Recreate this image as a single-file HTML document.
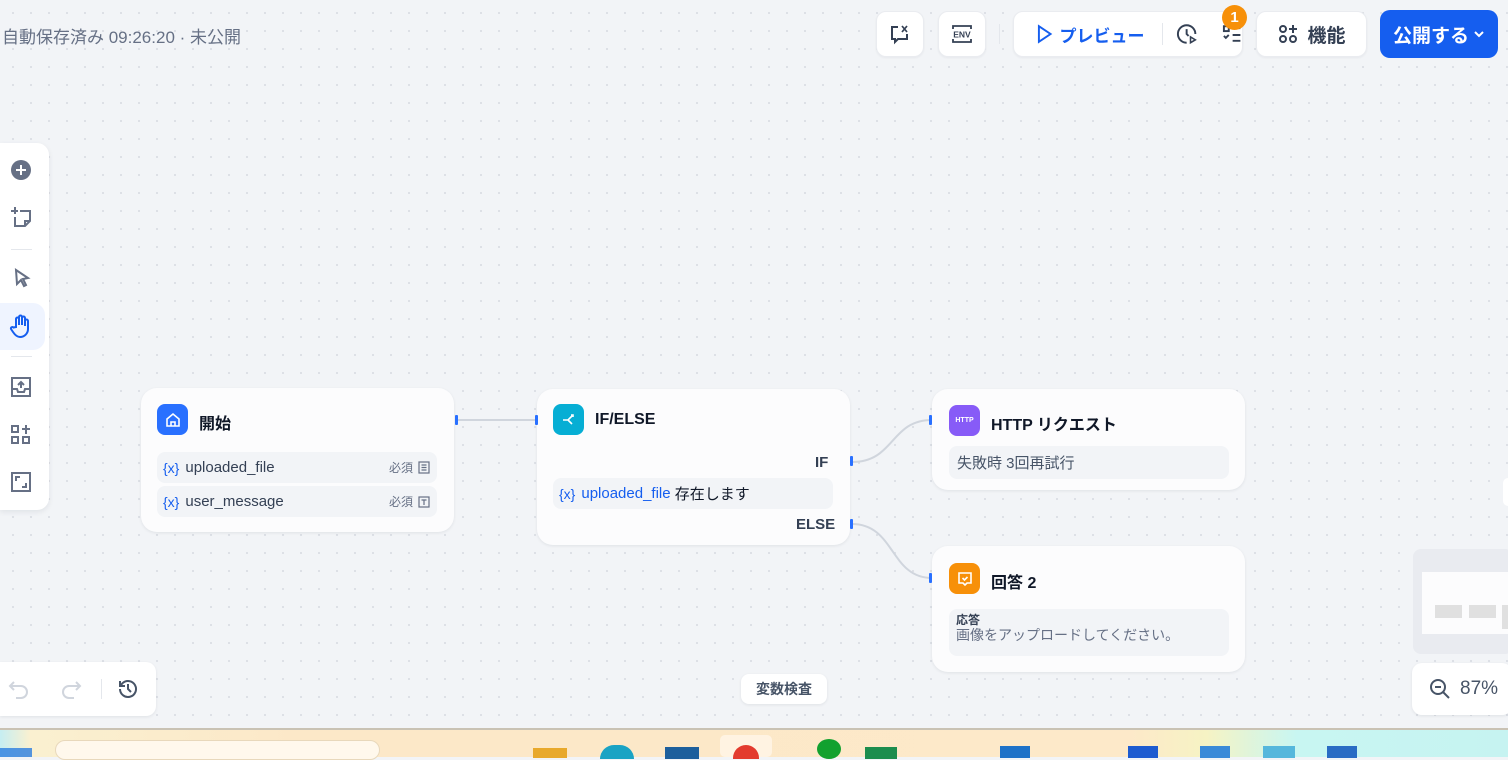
<!DOCTYPE html>
<html><head><meta charset="utf-8"><style>
*{box-sizing:border-box;margin:0;padding:0}
body{width:1508px;height:757px;overflow:hidden;position:relative;font-family:"Liberation Sans","Noto Sans CJK JP",sans-serif;background:#f2f4f7;background-image:radial-gradient(circle,#dcdfe5 1px,transparent 1.3px);background-size:18px 18px;background-position:4px 4px;color:#101828;white-space:nowrap}
.abs{position:absolute}
.card{position:absolute;background:#fcfcfd;border-radius:16px;box-shadow:0 1px 3px rgba(16,24,40,.08)}
.btn{position:absolute;background:#fff;border-radius:10px;border:1px solid #eaecf0;box-shadow:0 1px 2px rgba(16,24,40,.05);display:flex;align-items:center;justify-content:center}
.ico{width:31px;height:31px;border-radius:8px;position:absolute;display:flex;align-items:center;justify-content:center}
.row{position:absolute;background:#f2f4f7;border-radius:8px;font-size:15px;display:flex;align-items:center;color:#344054}
.v{color:#155eef;font-size:14px;margin:0 6px 0 6px}
.port{position:absolute;width:3px;height:10px;background:#2970ff;border-radius:1px}
.ttl{position:absolute;font-size:16px;font-weight:bold;color:#101828}
</style></head><body>
<div class="abs" style="left:2px;top:23px;font-size:17px;color:#667085">自動保存済み 09:26:20 · 未公開</div>

<div class="btn" style="left:876px;top:11px;width:48px;height:46px"><svg width="24" height="24" viewBox="0 0 24 24" fill="none" stroke="#344054" stroke-width="2"><path d="M10 5H4v12h3v3l3-3h9v-5"/><path d="M14 4l5 6M19 4l-5 6" stroke-width="1.7"/></svg></div>
<div class="btn" style="left:938px;top:11px;width:48px;height:46px"><svg width="24" height="22" viewBox="0 0 24 22" fill="none" stroke="#344054" stroke-width="1.8"><path d="M3 6V3h18v3M3 16v3h18v-3"/><text x="12" y="14.5" font-size="8.5" font-weight="bold" fill="#344054" stroke="none" text-anchor="middle" font-family="Liberation Sans">ENV</text></svg></div>
<div class="abs" style="left:999px;top:24px;width:1px;height:20px;background:#e4e7ec"></div>
<div class="btn" style="left:1013px;top:11px;width:230px;height:46px;justify-content:flex-start">
<svg style="margin-left:22px" width="18" height="20" viewBox="0 0 18 20" fill="none" stroke="#155eef" stroke-width="2"><path d="M3 2l12 8-12 8z"/></svg>
<span style="color:#155eef;font-weight:bold;font-size:17px;margin-left:6px">プレビュー</span>
<div style="width:1px;height:22px;background:#e4e7ec;margin-left:18px"></div>
<svg style="margin-left:12px" width="24" height="24" viewBox="0 0 24 24" fill="none" stroke="#344054" stroke-width="2"><path d="M12 21a9 9 0 1 1 9-9"/><path d="M12 7v5l2 2"/><path d="M16 15l5 3-5 3z" stroke-width="1.6"/></svg>
<svg style="margin-left:22px" width="22" height="22" viewBox="0 0 22 22" fill="none" stroke="#344054" stroke-width="2"><rect x="3" y="3" width="5" height="5"/><path d="M12 5h8M12 12h8M12 18h8M3 13l2 2 3-3"/></svg>
</div>
<div class="abs" style="left:1222px;top:5px;width:25px;height:25px;border-radius:50%;background:#f79009;color:#fff;font-weight:bold;font-size:15px;text-align:center;line-height:25px">1</div>
<div class="btn" style="left:1256px;top:11px;width:111px;height:46px"><svg width="22" height="22" viewBox="0 0 22 22" fill="none" stroke="#344054" stroke-width="2"><circle cx="6" cy="6" r="3"/><circle cx="6" cy="16" r="3"/><circle cx="16" cy="16" r="3"/><path d="M16 2v8M12 6h8"/></svg><span style="font-size:19px;font-weight:bold;color:#344054;margin-left:8px">機能</span></div>
<div class="abs" style="left:1380px;top:10px;width:118px;height:48px;border-radius:10px;background:#155eef;color:#fff;font-weight:bold;font-size:19px;display:flex;align-items:center;justify-content:center">公開する<svg style="margin-left:4px" width="12" height="12" viewBox="0 0 12 12" fill="none" stroke="#fff" stroke-width="2"><path d="M2 4l4 4 4-4"/></svg></div>

<!-- left toolbar -->
<div class="abs" style="left:0;top:143px;width:49px;height:367px;background:#fff;border-radius:0 12px 12px 0;box-shadow:0 2px 6px rgba(16,24,40,.08)"></div>
<svg class="abs" style="left:10px;top:159px" width="22" height="22" viewBox="0 0 22 22"><circle cx="11" cy="11" r="10" fill="#667085"/><path d="M11 6v10M6 11h10" stroke="#fff" stroke-width="2"/></svg>
<svg class="abs" style="left:10px;top:206px" width="22" height="22" viewBox="0 0 22 22" fill="none" stroke="#667085" stroke-width="2"><path d="M5 1v7M1 5h7"/><path d="M10 5h10v10l-5 5H5v-9"/><path d="M15 20v-5h5"/></svg>
<div class="abs" style="left:11px;top:249px;width:21px;height:1px;background:#e4e7ec"></div>
<svg class="abs" style="left:12px;top:267px" width="20" height="22" viewBox="0 0 20 22" fill="none" stroke="#667085" stroke-width="2"><path d="M4 3l12 8-5 1 3 6-2 1-3-6-4 4z"/></svg>
<div class="abs" style="left:0;top:303px;width:45px;height:47px;background:#eff4ff;border-radius:0 12px 12px 0"></div>
<svg class="abs" style="left:9px;top:313px" width="24" height="26" viewBox="0 0 24 26" fill="none" stroke="#155eef" stroke-width="2"><path d="M7 14V6a1.5 1.5 0 0 1 3 0v6V4a1.5 1.5 0 0 1 3 0v8V5a1.5 1.5 0 0 1 3 0v8V8a1.5 1.5 0 0 1 3 0v8a8 8 0 0 1-8 8c-3 0-5-2-7-5l-2-3a1.5 1.5 0 0 1 2.5-1.5z"/></svg>
<div class="abs" style="left:11px;top:356px;width:21px;height:1px;background:#e4e7ec"></div>
<svg class="abs" style="left:10px;top:376px" width="22" height="22" viewBox="0 0 22 22" fill="none" stroke="#667085" stroke-width="2"><rect x="2" y="2" width="18" height="18"/><path d="M2 13h5l1 3h6l1-3h5M11 12V6M8 9l3-3 3 3"/></svg>
<svg class="abs" style="left:10px;top:424px" width="22" height="22" viewBox="0 0 22 22" fill="none" stroke="#667085" stroke-width="2"><rect x="2" y="2" width="6" height="6"/><rect x="2" y="13" width="6" height="6"/><rect x="13" y="13" width="6" height="6"/><path d="M16 1v9M12 5h8"/></svg>
<svg class="abs" style="left:10px;top:471px" width="22" height="22" viewBox="0 0 22 22" fill="none" stroke="#667085" stroke-width="2"><rect x="2" y="2" width="18" height="18"/><path d="M6 10V6h4M16 12v4h-4"/></svg>

<!-- edges -->
<svg class="abs" style="left:0;top:0" width="1508" height="757" fill="none" stroke="#d0d5dd" stroke-width="2">
<path d="M458 420H536"/>
<path d="M852 462C895 462 890 420 932 420"/>
<path d="M852 524C895 524 890 578 932 578"/>
</svg>

<!-- Start node -->
<div class="card" style="left:141px;top:388px;width:313px;height:144px"></div>
<div class="ico" style="left:157px;top:404px;background:#2970ff"><svg width="16" height="16" viewBox="0 0 16 16" fill="none" stroke="#fff" stroke-width="1.6"><path d="M2 7l6-5 6 5v7H2z"/><path d="M6 14V10h4v4"/></svg></div>
<div class="ttl" style="left:199px;top:410px">開始</div>
<div class="row" style="left:157px;top:452px;width:280px;height:31px"><span class="v">{x}</span>uploaded_file<span style="margin-left:auto;font-size:12px;color:#667085">必須</span><svg style="margin:0 7px 0 5px" width="12" height="13" viewBox="0 0 12 13" fill="none" stroke="#667085" stroke-width="1.2"><rect x="1" y="1" width="10" height="11"/><path d="M3.5 4h5M3.5 6.5h5M3.5 9h5"/></svg></div>
<div class="row" style="left:157px;top:486px;width:280px;height:31px"><span class="v">{x}</span>user_message<span style="margin-left:auto;font-size:12px;color:#667085">必須</span><svg style="margin:0 7px 0 5px" width="12" height="12" viewBox="0 0 12 12" fill="none" stroke="#667085" stroke-width="1.2"><rect x="1" y="1" width="10" height="10"/><path d="M3.5 4h5M6 4v5"/></svg></div>
<div class="port" style="left:455px;top:415px"></div>

<!-- IF/ELSE -->
<div class="card" style="left:537px;top:389px;width:313px;height:156px"></div>
<div class="port" style="left:535px;top:415px"></div>
<div class="ico" style="left:553px;top:404px;background:#06aed4"><svg width="16" height="16" viewBox="0 0 16 16" fill="none" stroke="#fff" stroke-width="1.6"><path d="M2 8h5l4-4M7 8l4 4M10 3h2v2"/></svg></div>
<div class="ttl" style="left:595px;top:411px">IF/ELSE</div>
<div class="abs" style="left:815px;top:454px;font-size:15px;font-weight:bold;color:#344054">IF</div>
<div class="row" style="left:553px;top:478px;width:280px;height:31px;color:#101828"><span class="v">{x}</span><span style="color:#155eef">uploaded_file</span>&nbsp;存在します</div>
<div class="abs" style="left:796px;top:516px;font-size:15px;font-weight:bold;color:#344054">ELSE</div>
<div class="port" style="left:850px;top:456px"></div>
<div class="port" style="left:850px;top:519px"></div>

<!-- HTTP -->
<div class="card" style="left:932px;top:389px;width:313px;height:101px"></div>
<div class="port" style="left:929px;top:415px"></div>
<div class="ico" style="left:949px;top:405px;background:#875bf7;font-size:7px;font-weight:bold;color:#fff">HTTP</div>
<div class="ttl" style="left:991px;top:411px">HTTP リクエスト</div>
<div class="row" style="left:949px;top:446px;width:280px;height:33px;padding-left:8px;color:#475467">失敗時 3回再試行</div>

<!-- answer -->
<div class="card" style="left:932px;top:546px;width:313px;height:126px"></div>
<div class="port" style="left:929px;top:573px"></div>
<div class="ico" style="left:949px;top:563px;background:#f79009"><svg width="16" height="16" viewBox="0 0 16 16" fill="none" stroke="#fff" stroke-width="1.6"><path d="M2 2h12v10H10l-2 2-2-2H2z"/><path d="M5.5 7l2 2 3-3"/></svg></div>
<div class="ttl" style="left:991px;top:569px">回答 2</div>
<div class="abs" style="left:949px;top:609px;width:280px;height:47px;background:#f2f4f7;border-radius:8px;padding:5px 7px">
<div style="font-size:12px;font-weight:bold;color:#344054;line-height:13px">応答</div>
<div style="font-size:14px;color:#667085;line-height:17px">画像をアップロードしてください。</div></div>
<div class="abs" style="left:1503px;top:478px;width:10px;height:28px;border-radius:14px;background:#fff"></div>

<!-- minimap -->
<div class="abs" style="left:1413px;top:549px;width:100px;height:105px;background:#e9ebf0;border-radius:8px"></div>
<div class="abs" style="left:1422px;top:572px;width:90px;height:62px;background:#fcfcfd"></div>
<div class="abs" style="left:1435px;top:605px;width:27px;height:13px;background:#e0e0e0"></div>
<div class="abs" style="left:1469px;top:605px;width:27px;height:13px;background:#e0e0e0"></div>
<div class="abs" style="left:1502px;top:605px;width:8px;height:24px;background:#e0e0e0"></div>
<div class="abs" style="left:1412px;top:663px;width:100px;height:52px;background:#fff;border-radius:10px;box-shadow:0 1px 3px rgba(16,24,40,.08);display:flex;align-items:center">
<svg style="margin-left:17px" width="22" height="22" viewBox="0 0 22 22" fill="none" stroke="#475467" stroke-width="2"><circle cx="9" cy="9" r="7"/><path d="M14 14l6 6M6 9h6"/></svg>
<span style="font-size:19px;color:#475467;margin-left:9px">87%</span></div>

<!-- undo bar -->
<div class="abs" style="left:0;top:662px;width:156px;height:54px;background:#fff;border-radius:0 10px 10px 0;box-shadow:0 1px 3px rgba(16,24,40,.08)"></div>
<svg class="abs" style="left:8px;top:678px" width="22" height="22" viewBox="0 0 22 22" fill="none" stroke="#d0d5dd" stroke-width="2"><path d="M6 4L2 8l4 4M2 8h11a6 6 0 0 1 0 12H8"/></svg>
<svg class="abs" style="left:60px;top:678px" width="22" height="22" viewBox="0 0 22 22" fill="none" stroke="#d0d5dd" stroke-width="2"><path d="M16 4l4 4-4 4M20 8H9a6 6 0 0 0 0 12h5"/></svg>
<div class="abs" style="left:101px;top:679px;width:1px;height:20px;background:#e4e7ec"></div>
<svg class="abs" style="left:117px;top:678px" width="22" height="22" viewBox="0 0 22 22" fill="none" stroke="#475467" stroke-width="2"><path d="M3 11a8 8 0 1 0 2.5-5.8L3 8M3 3v5h5M11 6v5l3 3"/></svg>
<div class="abs" style="left:741px;top:674px;width:86px;height:30px;background:#fff;border-radius:8px;box-shadow:0 1px 3px rgba(16,24,40,.08);font-size:14px;font-weight:bold;color:#475467;text-align:center;line-height:30px">変数検査</div>

<!-- taskbar -->
<div class="abs" style="left:0;top:728px;width:1508px;height:2px;background:#c9c2b4"></div>
<div class="abs" style="left:0;top:730px;width:1508px;height:27px;background:linear-gradient(90deg,#c6eef2 0%,#faf0d0 2%,#fce8c8 20%,#fde9c9 75%,#f6f3c4 80%,#c8f6f2 86%,#c6f3f1 100%)"></div>
<div class="abs" style="left:0;top:748px;width:32px;height:9px;background:#2b7de0;opacity:.8"></div>
<div class="abs" style="left:55px;top:740px;width:325px;height:20px;border-radius:12px;background:#fff8ec;border:1px solid #e8d8bb"></div>
<div class="abs" style="left:720px;top:735px;width:52px;height:22px;background:#fff3e2;border-radius:5px"></div>
<div class="abs" style="left:733px;top:745px;width:26px;height:14px;border-radius:13px 13px 0 0;background:#e33b2e"></div>
<div class="abs" style="left:533px;top:748px;width:34px;height:10px;background:#e8a92c"></div>
<div class="abs" style="left:600px;top:745px;width:34px;height:14px;border-radius:17px 17px 0 0;background:#1aa3c4"></div>
<div class="abs" style="left:665px;top:747px;width:34px;height:12px;background:#1d5f9c"></div>
<div class="abs" style="left:817px;top:739px;width:24px;height:20px;border-radius:50%;background:#12a12f"></div>
<div class="abs" style="left:865px;top:747px;width:32px;height:12px;background:#1c8d4e"></div>
<div class="abs" style="left:1000px;top:746px;width:30px;height:12px;background:#1e72c8"></div>
<div class="abs" style="left:1128px;top:746px;width:30px;height:12px;background:#1d5bd0"></div>
<div class="abs" style="left:1200px;top:746px;width:30px;height:12px;background:#3a8ad8"></div>
<div class="abs" style="left:1263px;top:746px;width:32px;height:12px;background:#55b7dc"></div>
<div class="abs" style="left:1327px;top:746px;width:30px;height:12px;background:#2a6cc4"></div>
</body></html>
